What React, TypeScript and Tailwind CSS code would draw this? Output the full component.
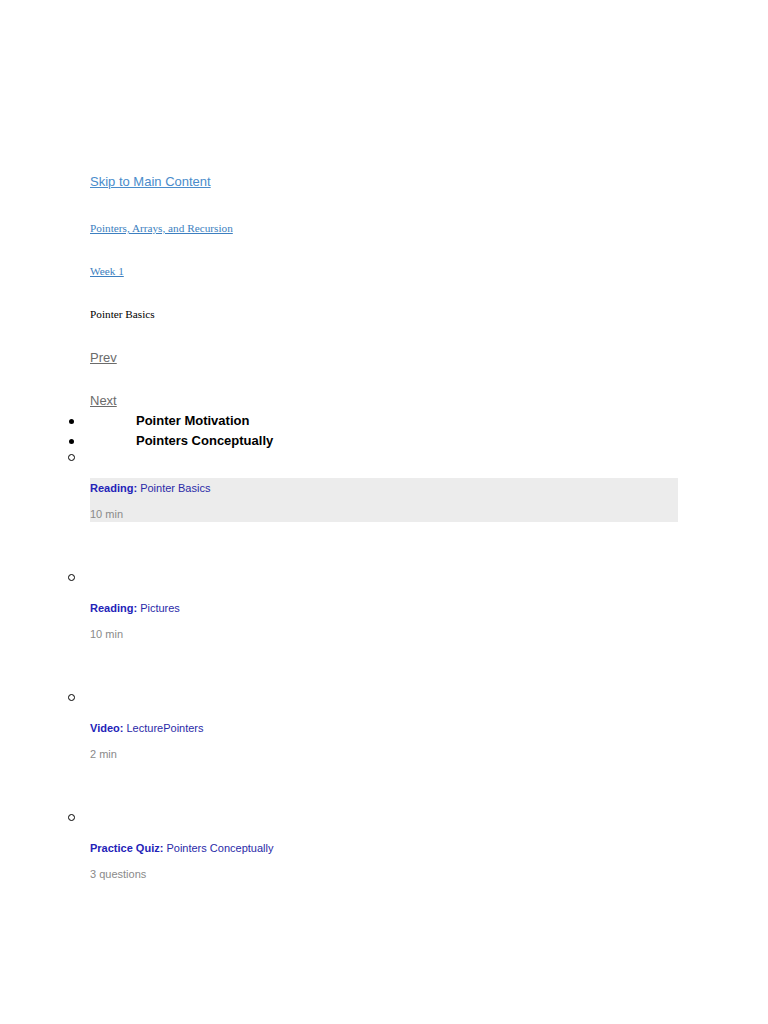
import React from 'react';

const sans = { fontFamily: '"Liberation Sans", Arial, sans-serif' };
const serif = { fontFamily: '"Liberation Serif", "Times New Roman", serif' };

interface LessonItem {
  kind: string;
  title: string;
  meta: string;
  active?: boolean;
}

const lessons: LessonItem[] = [
  { kind: 'Reading:', title: 'Pointer Basics', meta: '10 min', active: true },
  { kind: 'Reading:', title: 'Pictures', meta: '10 min' },
  { kind: 'Video:', title: 'LecturePointers', meta: '2 min' },
  { kind: 'Practice Quiz:', title: 'Pointers Conceptually', meta: '3 questions' },
];

const Circle = () => (
  <span className="inline-block w-[7px] h-[7px] rounded-full border border-black" />
);

const Dot = () => <span className="inline-block w-[5px] h-[5px] rounded-full bg-black" />;

export default function App() {
  return (
    <div className="w-[768px] h-[1024px] bg-white" style={sans}>
      <div className="pt-[174px] pl-[90px] flex flex-col">
        <a href="#" className="h-[46px] text-[13px] leading-[16px] text-[#4a8ccb] underline">
          Skip to Main Content
        </a>
        <a href="#" className="h-[43px] text-[11.25px] leading-[16px] text-[#3d7fc0] underline" style={serif}>
          Pointers, Arrays, and Recursion
        </a>
        <a href="#" className="h-[43px] text-[11.25px] leading-[16px] text-[#3d7fc0] underline" style={serif}>
          Week 1
        </a>
        <span className="h-[44px] text-[11.25px] leading-[16px] text-black" style={serif}>
          Pointer Basics
        </span>
        <a href="#" className="h-[43px] text-[13px] leading-[16px] text-[#6b6b6b] underline">
          Prev
        </a>
        <a href="#" className="h-[18px] text-[13px] leading-[16px] text-[#6b6b6b] underline">
          Next
        </a>
      </div>

      <ul className="flex flex-col">
        {['Pointer Motivation', 'Pointers Conceptually'].map((t) => (
          <li key={t} className="flex items-center h-[20px]">
            <span className="w-[136px] pl-[69px] flex items-center">
              <Dot />
            </span>
            <span className="text-[13px] font-bold text-black leading-[20px]">{t}</span>
          </li>
        ))}
      </ul>

      <ul className="flex flex-col">
        {lessons.map((l) => (
          <li key={l.title} className="h-[120px] flex flex-col">
            <div className="h-[12px] pl-[68px] flex items-center">
              <Circle />
            </div>
            <div
              className={`mt-[15px] ml-[90px] w-[588px] h-[44px] pt-[2px] flex flex-col ${
                l.active ? 'bg-[#ececec]' : ''
              }`}
            >
              <div className="text-[11px] leading-[14px] h-[27px] pt-[1px]">
                <span className="font-bold text-[#2323b8]">{l.kind}</span>{' '}
                <span className="text-[#2a2aa8]">{l.title}</span>
              </div>
              <div className="text-[11px] leading-[14px] text-[#8a8a8a]">{l.meta}</div>
            </div>
          </li>
        ))}
      </ul>
    </div>
  );
}
